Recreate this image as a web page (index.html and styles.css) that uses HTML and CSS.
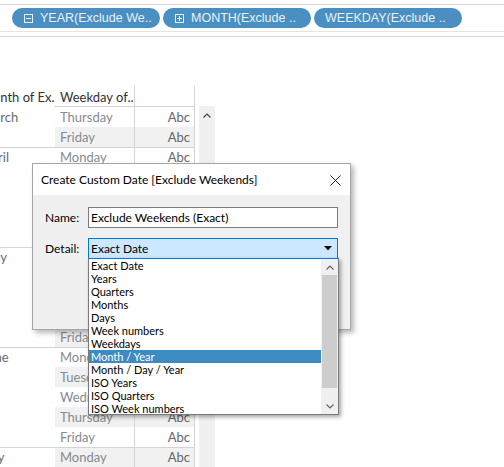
FILE: index.html
```html
<!DOCTYPE html>
<html>
<head>
<meta charset="utf-8">
<link rel="stylesheet" href="styles.css">
</head>
<body>
<div class="page">
  <div class="shelf">
    <div class="pill">
      <svg class="pill-icon" width="9" height="9" viewBox="0 0 9 9"><rect x="0.5" y="0.5" width="8" height="8" fill="none" stroke="#e8f1f8"/><line x1="2" y1="4.5" x2="7" y2="4.5" stroke="#e8f1f8"/></svg>
      <span>YEAR(Exclude We..</span>
    </div>
    <div class="pill">
      <svg class="pill-icon" width="9" height="9" viewBox="0 0 9 9"><rect x="0.5" y="0.5" width="8" height="8" fill="none" stroke="#e8f1f8"/><line x1="2" y1="4.5" x2="7" y2="4.5" stroke="#e8f1f8"/><line x1="4.5" y1="2" x2="4.5" y2="7" stroke="#e8f1f8"/></svg>
      <span>MONTH(Exclude ..</span>
    </div>
    <div class="pill pill-plain">
      <span>WEEKDAY(Exclude ..</span>
    </div>
  </div>
  <div class="divider"></div>

  <div class="view">
    <div class="table">
      <div class="row header">
        <div class="c-month"><span>Month of Ex..</span></div>
        <div class="c-day">Weekday of..</div>
        <div class="c-abc"></div>
      </div>

      <div class="row"><div class="c-month"><span>March</span></div><div class="c-day">Thursday</div><div class="c-abc">Abc</div></div>
      <div class="row band"><div class="c-month"></div><div class="c-day">Friday</div><div class="c-abc">Abc</div></div>

      <div class="row grp"><div class="c-month"><span>April</span></div><div class="c-day">Monday</div><div class="c-abc">Abc</div></div>
      <div class="row band"><div class="c-month"></div><div class="c-day">Tuesday</div><div class="c-abc">Abc</div></div>
      <div class="row"><div class="c-month"></div><div class="c-day">Wednesday</div><div class="c-abc">Abc</div></div>
      <div class="row band"><div class="c-month"></div><div class="c-day">Thursday</div><div class="c-abc">Abc</div></div>
      <div class="row"><div class="c-month"></div><div class="c-day">Friday</div><div class="c-abc">Abc</div></div>

      <div class="row grp band"><div class="c-month"><span>May</span></div><div class="c-day">Monday</div><div class="c-abc">Abc</div></div>
      <div class="row"><div class="c-month"></div><div class="c-day">Tuesday</div><div class="c-abc">Abc</div></div>
      <div class="row band"><div class="c-month"></div><div class="c-day">Wednesday</div><div class="c-abc">Abc</div></div>
      <div class="row"><div class="c-month"></div><div class="c-day">Thursday</div><div class="c-abc">Abc</div></div>
      <div class="row band"><div class="c-month"></div><div class="c-day">Friday</div><div class="c-abc">Abc</div></div>

      <div class="row grp"><div class="c-month"><span>June</span></div><div class="c-day">Monday</div><div class="c-abc">Abc</div></div>
      <div class="row band"><div class="c-month"></div><div class="c-day">Tuesday</div><div class="c-abc">Abc</div></div>
      <div class="row"><div class="c-month"></div><div class="c-day">Wednesday</div><div class="c-abc">Abc</div></div>
      <div class="row band"><div class="c-month"></div><div class="c-day">Thursday</div><div class="c-abc">Abc</div></div>
      <div class="row"><div class="c-month"></div><div class="c-day">Friday</div><div class="c-abc">Abc</div></div>

      <div class="row grp band"><div class="c-month"><span>July</span></div><div class="c-day">Monday</div><div class="c-abc">Abc</div></div>
    </div>
    <div class="vscroll">
      <svg class="chev" width="8" height="5" viewBox="0 0 8 5"><polyline points="0.5,4.5 4,1 7.5,4.5" fill="none" stroke="#444" stroke-width="1.2"/></svg>
    </div>
  </div>

  <div class="dialog">
    <div class="dlg-title">
      <span>Create Custom Date [Exclude Weekends]</span>
      <svg class="close" width="11" height="11" viewBox="0 0 11 11"><line x1="0.5" y1="0.5" x2="10.5" y2="10.5" stroke="#222"/><line x1="10.5" y1="0.5" x2="0.5" y2="10.5" stroke="#222"/></svg>
    </div>
    <div class="dlg-body">
      <div class="field">
        <label class="lbl">Name:</label>
        <div class="input">Exclude Weekends (Exact)</div>
      </div>
      <div class="field">
        <label class="lbl">Detail:</label>
        <div class="select">
          <span>Exact Date</span>
          <svg class="tri" width="8" height="5" viewBox="0 0 8 5"><polygon points="0,0 8,0 4,4.5" fill="#111"/></svg>
        </div>
      </div>
    </div>
  </div>

  <div class="droplist">
    <div class="items">
      <div class="item">Exact Date</div>
      <div class="item">Years</div>
      <div class="item">Quarters</div>
      <div class="item">Months</div>
      <div class="item">Days</div>
      <div class="item">Week numbers</div>
      <div class="item">Weekdays</div>
      <div class="item selected">Month / Year</div>
      <div class="item">Month / Day / Year</div>
      <div class="item">ISO Years</div>
      <div class="item">ISO Quarters</div>
      <div class="item">ISO Week numbers</div>
    </div>
    <div class="lscroll">
      <div class="sbtn"><svg width="8" height="5" viewBox="0 0 8 5"><polyline points="0.5,4.5 4,1 7.5,4.5" fill="none" stroke="#606060" stroke-width="1.1"/></svg></div>
      <div class="thumb"></div>
      <div class="track"></div>
      <div class="sbtn"><svg width="8" height="5" viewBox="0 0 8 5"><polyline points="0.5,0.5 4,4 7.5,0.5" fill="none" stroke="#606060" stroke-width="1.1"/></svg></div>
    </div>
  </div>
</div>
</body>
</html>
```

FILE: styles.css
```css
html, body {
  margin: 0;
  padding: 0;
  background: #ffffff;
}

.page {
  position: relative;
  width: 504px;
  height: 467px;
  overflow: hidden;
  background: #ffffff;
  font-family: Lato, "Liberation Sans", sans-serif;
}

/* shelf with pills */
.shelf {
  margin-top: 4px;
  border-top: 1px solid #dadada;
  border-bottom: 1px solid #e4e4e4;
  padding: 3px 0 3px 12px;
  display: flex;
  gap: 3px;
}

.pill {
  box-sizing: border-box;
  width: 148px;
  height: 20px;
  border-radius: 10px;
  background: #4a8fc1;
  color: #e9f1f8;
  display: flex;
  align-items: center;
  padding-left: 12px;
  gap: 7px;
  font-family: "Liberation Sans", Arial, sans-serif;
  font-size: 12.5px;
  white-space: nowrap;
  overflow: hidden;
}

.pill-plain {
  padding-left: 11px;
}

.pill-icon {
  flex: none;
  display: block;
}

.divider {
  margin-top: 4px;
  border-top: 1px solid #d6d6d6;
}

/* table view */
.view {
  display: flex;
  margin-top: 49px;
}

.table {
  width: 195px;
  flex: none;
  font-size: 13px;
}

.row {
  display: flex;
  height: 20px;
  box-sizing: border-box;
  line-height: 20px;
}

.row.grp {
  border-top: 1px solid #d4d4d4;
  line-height: 19px;
}

.c-month {
  width: 55px;
  flex: none;
  overflow: hidden;
  white-space: nowrap;
  color: #6b6b6b;
}

.c-month span {
  display: block;
  margin-left: -18px;
}

.c-day {
  width: 79px;
  flex: none;
  box-sizing: border-box;
  padding-left: 5px;
  color: #858b90;
  white-space: nowrap;
  overflow: hidden;
}

.c-abc {
  width: 61px;
  flex: none;
  box-sizing: border-box;
  border-left: 1px solid #d4d4d4;
  border-right: 1px solid #d4d4d4;
  text-align: right;
  padding-right: 4px;
  color: #666;
}

.row.band .c-day,
.row.band .c-abc {
  background: #f1f1f1;
}

.row.header {
  height: 21px;
  line-height: 22px;
}

.row.header .c-month {
  color: #333;
}

.row.header .c-month span {
  margin-left: -19px;
}

.row.header .c-day {
  color: #333;
  border-bottom: 1px solid #d4d4d4;
}

.row.header .c-abc {
  border-bottom: 1px solid #d4d4d4;
}

.vscroll {
  width: 16px;
  margin-left: 4px;
  margin-top: 20px;
  height: 400px;
  background: #f0f0f0;
  display: flex;
  justify-content: center;
}

.vscroll .chev {
  margin-top: 7px;
}

/* dialog */
.dialog {
  position: absolute;
  left: 32px;
  top: 163px;
  width: 319px;
  height: 167px;
  box-sizing: border-box;
  border: 1px solid #a6a6a6;
  background: #f0f0f0;
  box-shadow: 3px 3px 5px rgba(0, 0, 0, 0.28);
  font-family: Lato, "Liberation Sans", sans-serif;
  font-size: 12px;
  color: #000;
}

.dlg-title {
  height: 31px;
  background: #ffffff;
  display: flex;
  align-items: center;
  justify-content: space-between;
  padding: 0 9px 0 8px;
}

.close {
  display: block;
  margin-top: 1px;
}

.dlg-body {
  padding: 12px 11px 0 12px;
  display: flex;
  flex-direction: column;
  gap: 10px;
}

.field {
  display: flex;
  align-items: center;
}

.lbl {
  width: 43px;
  flex: none;
}

.input {
  box-sizing: border-box;
  width: 250px;
  height: 21px;
  border: 1px solid #7a7a7a;
  background: #ffffff;
  padding-left: 2px;
  line-height: 19px;
}

.select {
  box-sizing: border-box;
  width: 250px;
  height: 21px;
  border: 1px solid #0078d7;
  background: #cce8ff;
  padding: 0 4px 0 2px;
  line-height: 19px;
  display: flex;
  align-items: center;
  justify-content: space-between;
}

.tri {
  display: block;
  margin-right: 1px;
}

/* drop-down list */
.droplist {
  position: absolute;
  left: 88px;
  top: 258px;
  width: 251px;
  height: 157px;
  box-sizing: border-box;
  border: 1px solid #7a7a7a;
  border-top: 1px solid #0078d7;
  background: #ffffff;
  box-shadow: 2px 2px 4px rgba(0, 0, 0, 0.35);
  display: flex;
  font-family: Lato, "Liberation Sans", sans-serif;
  font-size: 11px;
  color: #000;
}

.items {
  flex: 1;
}

.item {
  height: 13px;
  line-height: 13px;
  padding-left: 2px;
  white-space: nowrap;
}

.item.selected {
  background: #3c8cc2;
  color: #ffffff;
}

.lscroll {
  width: 17px;
  flex: none;
  background: #f0f0f0;
  display: flex;
  flex-direction: column;
}

.sbtn {
  height: 16px;
  display: flex;
  align-items: center;
  justify-content: center;
}

.thumb {
  margin: 0 1px;
  height: 113px;
  background: #cdcdcd;
}

.track {
  flex: 1;
}
```
